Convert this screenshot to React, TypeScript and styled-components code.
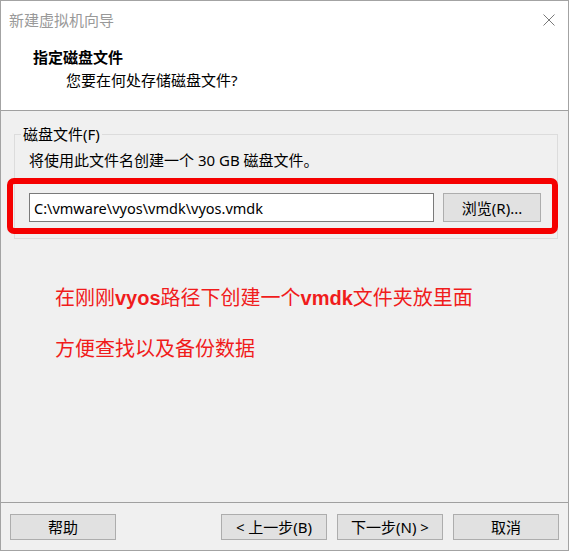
import React from "react";
import styled, { createGlobalStyle } from "styled-components";

const GlobalStyle = createGlobalStyle`
  html, body {
    margin: 0;
    padding: 0;
    background: #fff;
  }
  body {
    font-family: "Noto Sans", "Noto Sans CJK SC", sans-serif;
  }
  * {
    box-sizing: border-box;
  }
`;

const Dialog = styled.div`
  width: 569px;
  height: 551px;
  display: flex;
  flex-direction: column;
  border: 1px solid #a3a3a3;
  background: #f0f0f0;
  font-size: 15px;
  color: #000;
`;

const TitleBar = styled.div`
  height: 38px;
  background: #fff;
  display: flex;
  align-items: center;
  justify-content: space-between;
  padding: 0 13px 0 8px;
  color: #999;
  line-height: 20px;
`;

const CloseIcon = styled.svg`
  width: 12px;
  height: 12px;
  display: block;
`;

const Header = styled.div`
  height: 72px;
  background: #fff;
  border-bottom: 1px solid #a0a0a0;
  padding: 8px 0 0 32px;
`;

const Heading = styled.div`
  font-weight: bold;
  line-height: 20px;
`;

const SubHeading = styled.div`
  margin-top: 3px;
  padding-left: 33px;
  line-height: 20px;
`;

const Body = styled.div`
  flex: 1;
  display: flex;
  flex-direction: column;
`;

const GroupBox = styled.fieldset`
  margin: 13px 10px 0 13px;
  padding: 6px 0 4px;
  border: 1px solid #dcdcdc;
  min-width: 0;
`;

const Legend = styled.legend`
  margin-left: 6px;
  padding: 0 2px;
  line-height: 20px;
`;

const Description = styled.div`
  padding-left: 14px;
  line-height: 20px;
`;

const RedFrame = styled.div`
  margin: 8px -1px 0 -8px;
  border: 6px solid #f50000;
  border-radius: 7px;
  padding: 9px 11px 6px 16px;
  display: flex;
  gap: 9px;
`;

const PathInput = styled.input`
  flex: 1;
  min-width: 0;
  height: 29px;
  border: 1px solid #7a7a7a;
  background: #fff;
  padding: 0 4px;
  font: inherit;
  font-size: 14.5px;
  color: #000;
  outline: none;
`;

const Button = styled.button<{ $width?: number }>`
  width: ${(p) => p.$width ?? 106}px;
  height: ${(p) => (p.$width ? 29 : 26)}px;
  background: #e1e1e1;
  border: 1px solid #adadad;
  padding: 0;
  font: inherit;
  color: #000;
  line-height: 20px;
`;

const Note = styled.div`
  margin: 44px 0 0 54px;
  color: #f01c1c;
  font-size: 20px;
  font-family: "Noto Sans CJK SC", sans-serif;
`;

const NoteLine = styled.div`
  line-height: 28px;
  & + & {
    margin-top: 22px;
  }
  b {
    font-family: "Liberation Sans", Arial, sans-serif;
    font-weight: bold;
  }
`;

const Footer = styled.div`
  height: 48px;
  border-top: 1px solid #a0a0a0;
  padding: 11px 9px 0 9px;
  display: flex;
  gap: 10px;
  > button:first-child {
    margin-right: auto;
  }
`;

export default function App() {
  return (
    <>
      <GlobalStyle />
      <Dialog>
        <TitleBar>
          <span>新建虚拟机向导</span>
          <CloseIcon viewBox="0 0 12 12">
            <path d="M0.5 0.5 L11.5 11.5 M11.5 0.5 L0.5 11.5" stroke="#7a7a7a" strokeWidth="1" fill="none" />
          </CloseIcon>
        </TitleBar>
        <Header>
          <Heading>指定磁盘文件</Heading>
          <SubHeading>您要在何处存储磁盘文件?</SubHeading>
        </Header>
        <Body>
          <GroupBox>
            <Legend>磁盘文件(F)</Legend>
            <Description>将使用此文件名创建一个 30 GB 磁盘文件。</Description>
            <RedFrame>
              <PathInput readOnly value="C:\vmware\vyos\vmdk\vyos.vmdk" />
              <Button $width={98}>浏览(R)...</Button>
            </RedFrame>
          </GroupBox>
          <Note>
            <NoteLine>
              在刚刚<b>vyos</b>路径下创建一个<b>vmdk</b>文件夹放里面
            </NoteLine>
            <NoteLine>方便查找以及备份数据</NoteLine>
          </Note>
        </Body>
        <Footer>
          <Button>帮助</Button>
          <Button>&lt; 上一步(B)</Button>
          <Button>下一步(N) &gt;</Button>
          <Button>取消</Button>
        </Footer>
      </Dialog>
    </>
  );
}
